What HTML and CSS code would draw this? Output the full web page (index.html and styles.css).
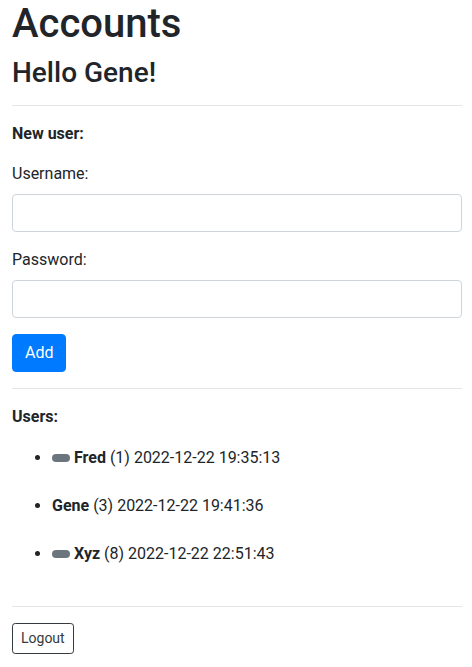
FILE: index.html
```html
<!DOCTYPE html>
<html lang="en">
<head>
<meta charset="utf-8">
<title>Accounts</title>
<link rel="stylesheet" href="styles.css">
</head>
<body>
<div class="page">
  <h1 class="title">Accounts</h1>
  <h3 class="greeting">Hello Gene!</h3>
  <hr class="rule">
  <form class="new-user">
    <p class="section-label"><b>New user:</b></p>
    <div class="form-group">
      <label class="field-label" for="username">Username:</label>
      <input class="form-control" id="username" type="text">
    </div>
    <div class="form-group">
      <label class="field-label" for="password">Password:</label>
      <input class="form-control" id="password" type="password">
    </div>
    <button class="btn btn-primary" type="button">Add</button>
  </form>
  <hr class="rule">
  <p class="section-label users-label"><b>Users:</b></p>
  <ul class="user-list">
    <li class="user-item"><span class="badge"></span> <b>Fred</b> (1) 2022-12-22 19:35:13</li>
    <li class="user-item"><b>Gene</b> (3) 2022-12-22 19:41:36</li>
    <li class="user-item"><span class="badge"></span> <b>Xyz</b> (8) 2022-12-22 22:51:43</li>
  </ul>
  <hr class="rule">
  <button class="btn btn-outline-dark btn-sm" type="button">Logout</button>
</div>
</body>
</html>
```
FILE: styles.css
```css
* { box-sizing: border-box; }
html, body { margin: 0; padding: 0; background: #fff; }
body {
  font-family: Roboto, "Liberation Sans", sans-serif;
  font-size: 16px;
  line-height: 1.5;
  color: #212529;
}
.page {
  padding: 0 10px 0 12px;
}
.title {
  font-size: 40px;
  font-weight: 500;
  line-height: 48px;
  margin: 0 0 8px;
}
.greeting {
  font-size: 28px;
  font-weight: 500;
  line-height: 33px;
  margin: 0 0 8px;
}
.rule {
  margin: 16px 0;
  border: 0;
  border-top: 1px solid rgba(0,0,0,0.1);
  height: 0;
}
.new-user { margin: 0; }
.section-label { margin: 0 0 16px; }
.users-label { margin-bottom: 17px; }
.section-label b { font-weight: 700; }
.form-group { margin-bottom: 16px; }
.field-label {
  display: inline-block;
  margin-bottom: 8px;
}
.form-control {
  display: block;
  width: 100%;
  height: 38px;
  padding: 6px 12px;
  font: inherit;
  color: #495057;
  background: #fff;
  border: 1px solid #ced4da;
  border-radius: 4px;
  margin: 0;
}
.btn {
  display: inline-block;
  font-family: inherit;
  font-size: 16px;
  line-height: 1.5;
  padding: 6px 12px;
  border: 1px solid transparent;
  border-radius: 4px;
  margin: 0;
  cursor: pointer;
}
.btn-primary {
  color: #fff;
  background: #007bff;
  border-color: #007bff;
}
.btn-outline-dark {
  color: #343a40;
  background: transparent;
  border-color: #343a40;
}
.btn-sm {
  font-size: 14px;
  padding: 4px 8px;
  border-radius: 3.2px;
}
.user-list {
  margin: 0 0 16px;
  padding-left: 40px;
}
.user-item {
  padding-bottom: 24px;
}
.user-item b { font-weight: 700; }
.badge {
  display: inline-block;
  width: 18px;
  height: 8px;
  background: #6c757d;
  border-radius: 4px;
  vertical-align: 1px;
}
```
